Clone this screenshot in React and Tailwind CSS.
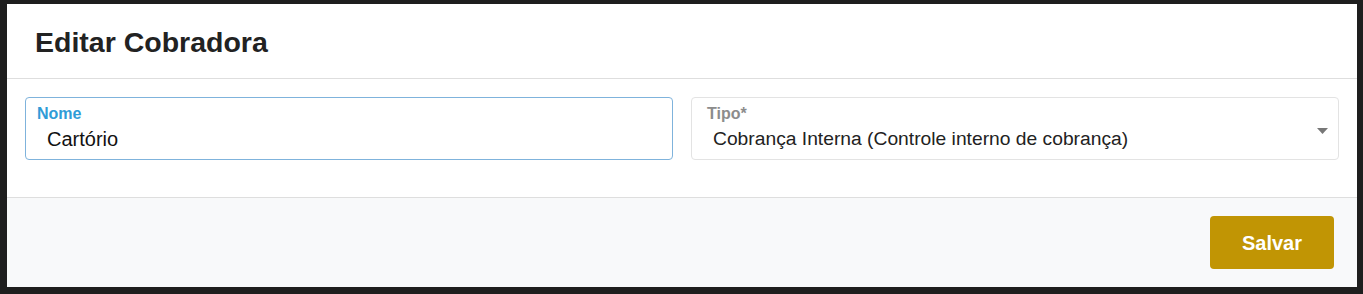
import React from 'react'

const font = { fontFamily: '"Liberation Sans", Arial, sans-serif' }

export default function App() {
    return (
        <div className="w-[1363px] h-[294px] bg-[#1e1e1e] pt-[4px] pl-[7px]" style={font}>
            <div className="w-[1350px] h-[283px] bg-white flex flex-col">
                {/* Cabeçalho */}
                <div className="h-[75px] flex items-center px-[28px] pt-[2px] border-b border-[#dedede]">
                    <h1 className="text-[28.5px] font-bold text-[#222]">Editar Cobradora</h1>
                </div>

                {/* Campos */}
                <div className="h-[119px] px-[18px] pt-[18px] grid grid-cols-2 gap-[18px] items-start border-b border-[#dedede]">
                    <div className="min-w-0 h-[63px] rounded-[4px] border border-[#7fb3dc] px-[11px] pt-[8px]">
                        <div className="text-[16px] font-bold text-[#2f9cd7] leading-[16px]">Nome</div>
                        <div className="text-[20px] text-[#111] leading-[28px] pl-[10px] mt-[3px]">Cartório</div>
                    </div>
                    <div className="min-w-0 h-[63px] rounded-[4px] border border-[#e3e3e3] pl-[15px] pr-[10px] pt-[8px] flex items-center">
                        <div className="flex-1 self-start">
                            <div className="text-[16px] text-[#8c8c8c] font-bold leading-[16px]">Tipo*</div>
                            <div className="text-[19.25px] text-[#222] leading-[28px] pl-[6px] mt-[3px]">Cobrança Interna (Controle interno de cobrança)</div>
                        </div>
                        <svg width="11" height="6" viewBox="0 0 11 6" className="mb-[3px]">
                            <path d="M0 0 L11 0 L5.5 6 Z" fill="#777" />
                        </svg>
                    </div>
                </div>

                {/* Rodapé */}
                <div className="flex-1 bg-[#f8f9fa] flex justify-end items-start pt-[18px] pr-[23px]">
                    <button className="w-[124px] h-[53px] rounded-[4px] bg-[#c19504] text-white text-[20px] font-bold">
                        Salvar
                    </button>
                </div>
            </div>
        </div>
    )
}
